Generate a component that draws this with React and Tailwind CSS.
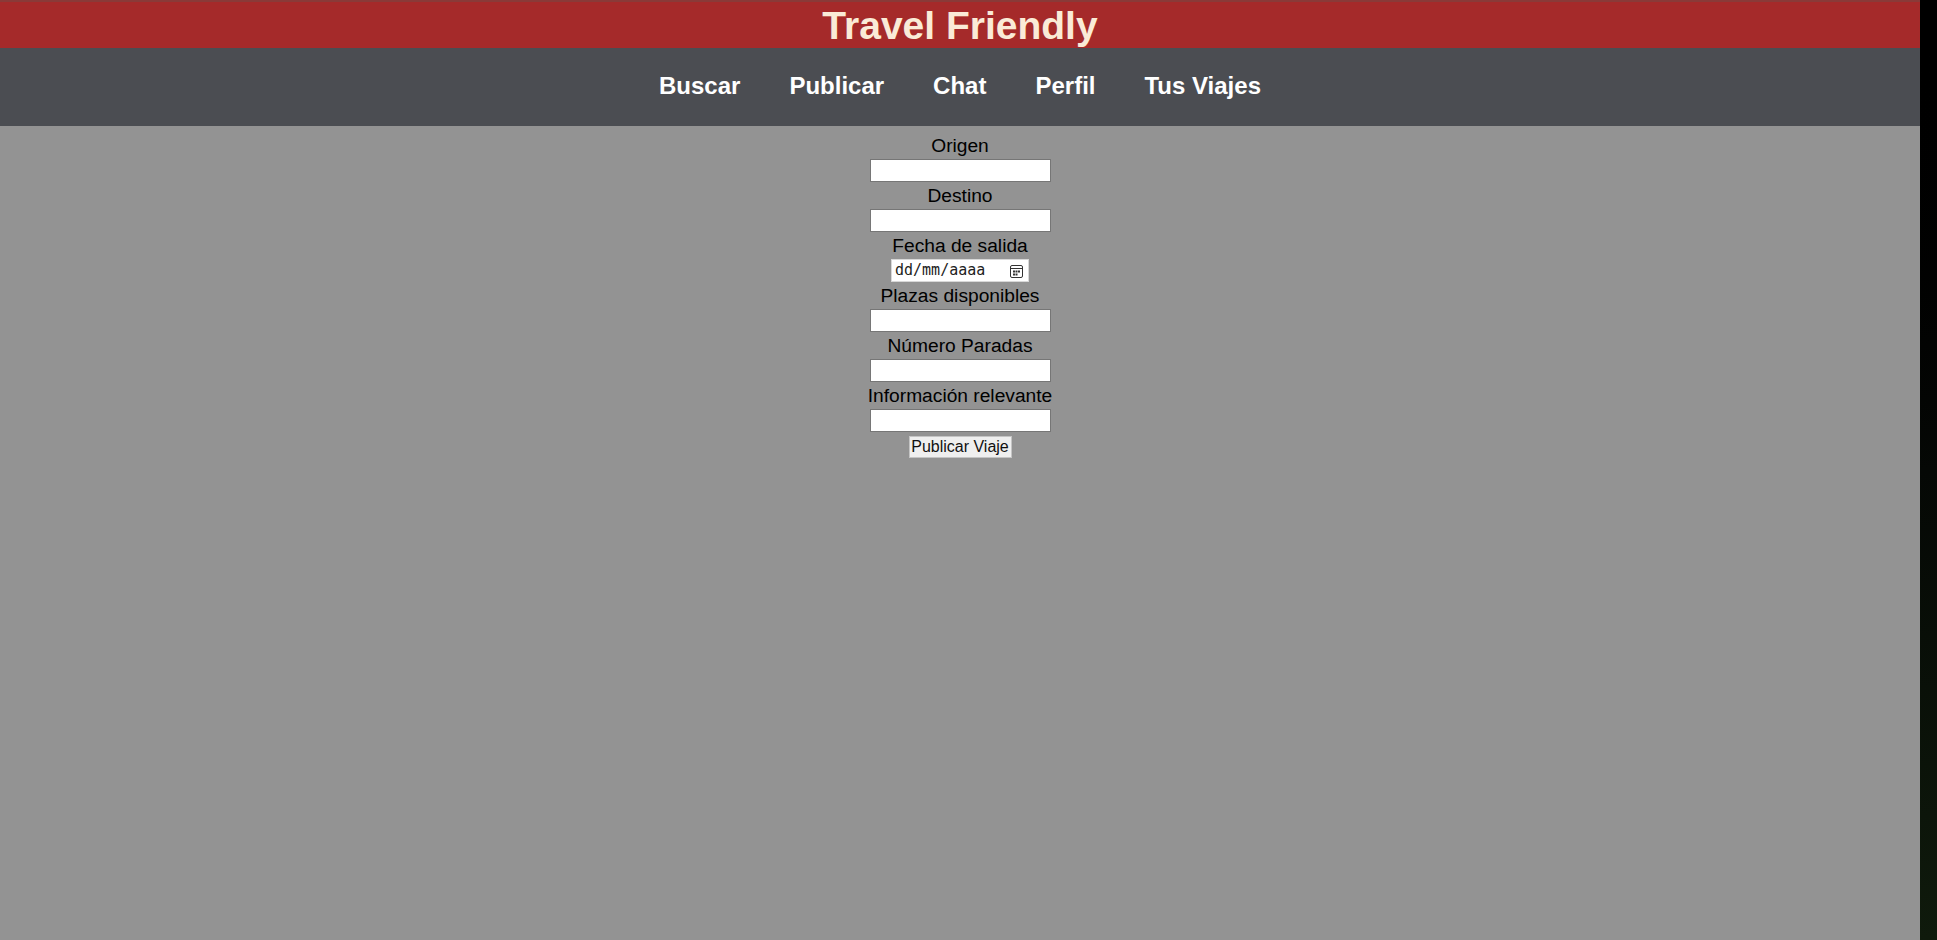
import React from 'react';

const navItems = ['Buscar', 'Publicar', 'Chat', 'Perfil', 'Tus Viajes'];

const fields = [
  { label: 'Origen' },
  { label: 'Destino' },
  { label: 'Fecha de salida', date: true },
  { label: 'Plazas disponibles' },
  { label: 'Número Paradas' },
  { label: 'Información relevante' },
];

function DateField() {
  return (
    <div className="flex h-[23px] w-[138px] items-center justify-between bg-white pl-[3px] pr-[5px] border border-[#d8d8d8]">
      <span className="text-[15px] leading-none text-[#222]" style={{ fontFamily: '"DejaVu Sans Mono", "Liberation Mono", monospace' }}>
        dd/mm/aaaa
      </span>
      <svg width="13" height="14" viewBox="0 0 13 14" fill="none">
        <rect x="0.5" y="1.5" width="12" height="12" rx="1.5" stroke="#333" />
        <line x1="0.5" y1="4.5" x2="12.5" y2="4.5" stroke="#333" />
        <rect x="3" y="6.5" width="2" height="2" fill="#333" />
        <rect x="5.5" y="6.5" width="2" height="2" fill="#333" />
        <rect x="8" y="6.5" width="2" height="2" fill="#333" />
        <rect x="3" y="9.5" width="2" height="2" fill="#333" />
        <rect x="5.5" y="9.5" width="2" height="2" fill="#333" />
      </svg>
    </div>
  );
}

export default function App() {
  return (
    <div className="flex min-h-screen w-full" style={{ fontFamily: '"Liberation Sans", Arial, sans-serif' }}>
      <div className="flex w-[1920px] shrink-0 flex-col bg-[#939393]">
        <header className="flex h-[48px] items-center justify-center border-t-[2px] border-[#8a3a38] bg-[#a52a2a]">
          <h1 className="text-[39px] font-bold leading-none text-[#faebd7]">Travel Friendly</h1>
        </header>
        <nav className="flex h-[78px] items-center justify-center gap-[49px] bg-[#4b4d52] pb-[3px]">
          {navItems.map(item => (
            <a key={item} className="text-[24px] font-bold text-white">{item}</a>
          ))}
        </nav>
        <form className="flex flex-col items-center pt-[6px]" onSubmit={e => e.preventDefault()}>
          {fields.map(f => (
            <React.Fragment key={f.label}>
              <label className="h-[27px] text-[19.2px] leading-[27px] text-black">{f.label}</label>
              {f.date ? (
                <DateField />
              ) : (
                <input type="text" className="h-[23px] w-[181px] border border-[#767676] bg-white px-[2px] text-[13px] outline-none" />
              )}
            </React.Fragment>
          ))}
          <button type="submit" className="mt-[4px] h-[22px] w-[103px] border border-[#c4c4c4] bg-[#efefef] text-[16px] leading-none text-[#111]">
            Publicar Viaje
          </button>
        </form>
      </div>
      <div className="flex-1 bg-gradient-to-b from-[#000000] via-[#050805] to-[#0f1a0c]" />
    </div>
  );
}
